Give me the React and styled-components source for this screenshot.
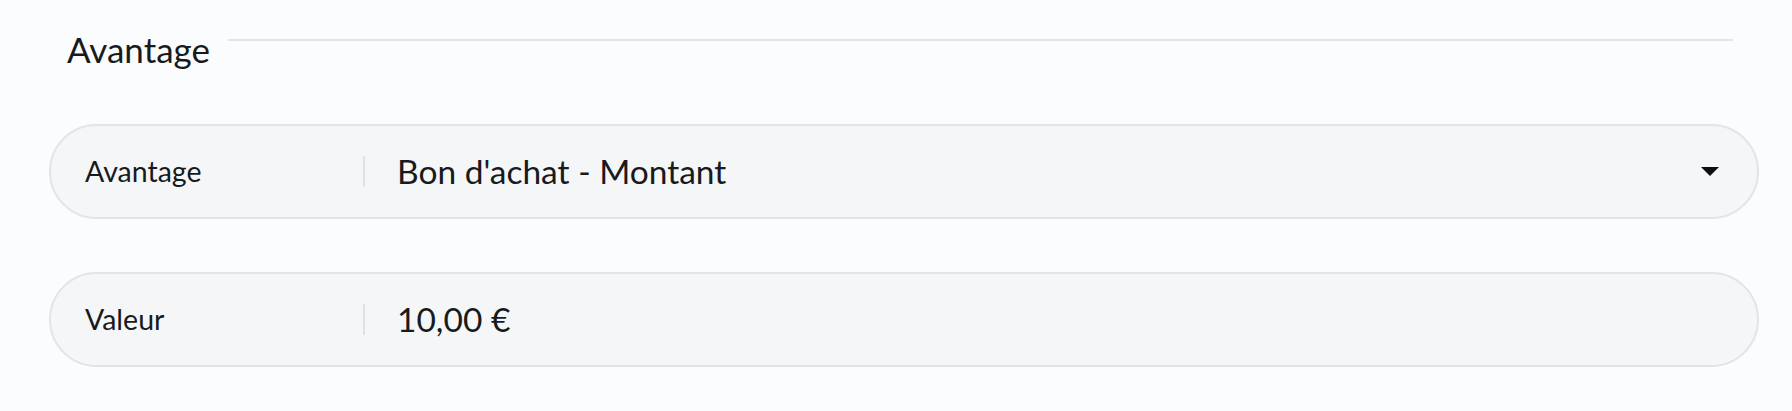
import React from 'react';
import styled, { createGlobalStyle } from 'styled-components';

const GlobalStyle = createGlobalStyle`
  html, body {
    margin: 0;
    padding: 0;
    background: #fbfcfd;
  }

  body {
    font-family: Lato, "Noto Sans", sans-serif;
    color: #181a1c;
  }
`;

const Page = styled.div`
  min-height: 411px;
  box-sizing: border-box;
  padding: 28px 33px 0 49px;
  background: #fbfcfd;
`;

const SectionHeader = styled.div`
  display: flex;
  align-items: flex-start;
  gap: 18px;
  padding: 0 26px 0 18px;
  margin-bottom: 54px;
`;

const SectionTitle = styled.h2`
  margin: 0;
  font-size: 35px;
  font-weight: 400;
  line-height: 42px;
  white-space: nowrap;
`;

const Rule = styled.div`
  flex: 1;
  height: 2px;
  margin-top: 11px;
  background: #dfe5ea;
`;

const FieldList = styled.div`
  display: flex;
  flex-direction: column;
  gap: 53px;
`;

const Field = styled.div`
  display: flex;
  align-items: center;
  box-sizing: border-box;
  height: 95px;
  padding: 0 38px 0 34px;
  background: #f4f6f8;
  border: 2px solid #e0e5e9;
  border-radius: 48px;
  cursor: ${(p) => (p.$select ? 'pointer' : 'text')};
`;

const Label = styled.span`
  width: 278px;
  flex-shrink: 0;
  font-size: 28.5px;
  line-height: 1.2;
`;

const Divider = styled.span`
  width: 2px;
  height: 31px;
  flex-shrink: 0;
  background: #dde3e8;
  margin-right: 32px;
`;

const Value = styled.span`
  flex: 1;
  font-size: 33.5px;
  line-height: 1.2;
`;

const Caret = styled.svg`
  width: 18px;
  height: 9px;
  flex-shrink: 0;
`;

const fields = [
  { label: 'Avantage', value: "Bon d'achat - Montant", select: true },
  { label: 'Valeur', value: '10,00 €' },
];

export default function App() {
  return (
    <>
      <GlobalStyle />
      <Page>
        <SectionHeader>
          <SectionTitle>Avantage</SectionTitle>
          <Rule />
        </SectionHeader>
        <FieldList>
          {fields.map((f) => (
            <Field key={f.label} $select={f.select}>
              <Label>{f.label}</Label>
              <Divider />
              <Value>{f.value}</Value>
              {f.select && (
                <Caret viewBox="0 0 18 9">
                  <path d="M0 0 L18 0 L9 9 Z" fill="#0d0f12" />
                </Caret>
              )}
            </Field>
          ))}
        </FieldList>
      </Page>
    </>
  );
}
